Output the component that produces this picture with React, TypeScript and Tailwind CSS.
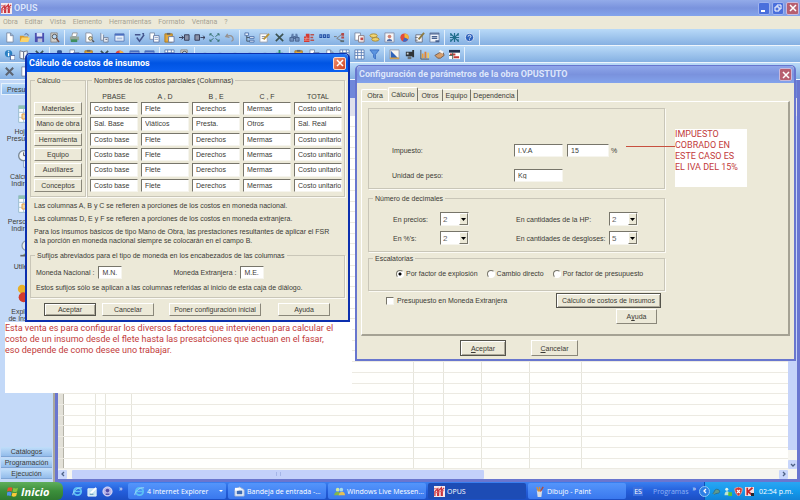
import type { ReactNode } from "react";
import clsx from "clsx";

const menus = ["Obra", "Editar", "Vista", "Elemento", "Herramientas", "Formato", "Ventana", "?"];

const mainBar = [
  ["page", "folder", "disk", "find"],
  ["printer", "preview", "clip", "screen"],
  ["check", "copy", "paste", "indent", "outdent", "expand", "undo"],
  ["tree", "edit", "cross", "binoculars", "bricks", "decimals", "branch"],
  ["copyred", "coins", "photo", "pie", "pencil", "form"],
  ["star", "help"],
];

const secondBar = [
  ["info", "book", "cross"],
  ["pin", "copy", "paste", "cross", "pie", "screen", "screen"],
  ["grid", "find"],
  ["dot", "dot", "dot", "dot", "dot", "plus"],
  ["paste", "copy", "page", "grid", "grid", "filter"],
  ["chart", "camera", "bars", "hand", "gantt"],
];

const sideItems = [
  { icon: "sheet", lines: ["Hoja de", "Presupuesto"] },
  { icon: "clock", lines: ["Cálculo de", "Indirectos"] },
  { icon: "sheet", lines: ["Personal de", "Indirectos"] },
  { icon: "tools", lines: ["Utilerías"] },
  { icon: "balls", lines: ["Explosión", "de Insumos"] },
];

const columns = ["PBASE", "A , D", "B , E", "C , F", "TOTAL"];
const standard = ["Costo base", "Flete", "Derechos", "Mermas", "Costo unitario"];
const costRows = [
  { name: "Materiales", values: standard },
  { name: "Mano de obra", values: ["Sal. Base", "Viáticos", "Presta.", "Otros", "Sal. Real"] },
  { name: "Herramienta", values: standard },
  { name: "Equipo", values: standard },
  { name: "Auxiliares", values: standard },
  { name: "Conceptos", values: standard },
];

const tasks = [
  { icon: "ie", label: "4 Internet Explorer", group: true },
  { icon: "mail", label: "Bandeja de entrada -..." },
  { icon: "people", label: "Windows Live Messen..." },
  { icon: "opus", label: "OPUS", active: true },
  { icon: "paint", label: "Dibujo - Paint" },
];

const drawings: Record<string, ReactNode> = {
  page: <path d="M3 1h4l3 3v7H3z M7 1v3h3" fill="#fff" stroke="#7d8da6" />,
  folder: (
    <>
      <path d="M1 4h4l1 1h4v6H1z" fill="#d99a2b" />
      <path d="M3 6h9l-2 5H1z" fill="#fbd46b" />
      <path d="M6 3c2-2 4-1 4 1" fill="none" stroke="#44598a" />
    </>
  ),
  disk: (
    <>
      <path d="M1 1h10v10H1z" fill="#4a4fb0" />
      <path d="M3 1h6v4H3z" fill="#dde4f7" />
      <path d="M4 7h5v4H4z" fill="#b9bfd8" />
    </>
  ),
  find: (
    <>
      <path d="M2 1h7v10H2z" fill="#d3d1cb" stroke="#8a8a8a" />
      <circle cx="6" cy="5" r="2.5" fill="#b7d5f1" stroke="#555" />
      <path d="M8 7l3 4" stroke="#7b4a3a" strokeWidth="1.5" />
    </>
  ),
  printer: (
    <>
      <path d="M4 1h5l-1 4H3z" fill="#fff" stroke="#999" />
      <path d="M1 5h10v4H1z" fill="#97a79b" />
      <path d="M2 8h7v3H2z" fill="#3f8f5e" />
    </>
  ),
  preview: (
    <>
      <path d="M2 1h5l2 2v8H2z" fill="#fff" stroke="#8a93a5" />
      <circle cx="7" cy="7" r="2" fill="#f1deb1" stroke="#665" />
      <path d="M9 9l2 2" stroke="#555" strokeWidth="1.5" />
    </>
  ),
  clip: (
    <>
      <path d="M2 1v8h3V3M5 6h5v5H5z" fill="#e8edf4" stroke="#7889a3" />
      <path d="M7 8h2" stroke="#556" />
    </>
  ),
  screen: (
    <>
      <path d="M1 2h10v8H1z" fill="#e9f1fb" stroke="#5a79b8" />
      <path d="M1 2h10v2H1z" fill="#4a6fc0" />
      <path d="M3 6h6v2H3z" fill="#a9bedf" />
    </>
  ),
  check: <path d="M1 3h6M9 2h2M3 6l3 4 5-7" fill="none" stroke="#44558c" strokeWidth="1.6" />,
  copy: (
    <>
      <path d="M1 1h5v7H1z" fill="#fff" stroke="#7f90ad" />
      <path d="M5 4h6v7H5z" fill="#fff" stroke="#5f76a4" />
      <path d="M6 6h4M6 8h4" stroke="#93a6ca" />
    </>
  ),
  paste: (
    <>
      <path d="M1 2h8v9H1z" fill="#e2a83b" stroke="#a87b24" />
      <path d="M3 1h4v2H3z" fill="#666" />
      <path d="M5 5h6v6H5z" fill="#fff" stroke="#6a7ca4" />
    </>
  ),
  indent: <path d="M0 6h5M3 4l2 2-2 2M6 3h5v6H6z" fill="#8b93aa" stroke="#333a55" />,
  outdent: <path d="M1 3h5v6H1zM7 6h5M10 4l2 2-2 2" fill="#8b93aa" stroke="#333a55" />,
  expand: <path d="M1 2l4 3M11 2L7 5M1 10l4-3M11 10L7 7M1 4V2h2M9 2h2v2M1 8v2h2M9 10h2V8" fill="none" stroke="#36706c" />,
  undo: <path d="M4 2L2 5l4 1M2 5c5-2 8-1 8 3 0 1-1 2-2 2" fill="none" stroke="#97918e" strokeWidth="1.4" />,
  tree: (
    <>
      <path d="M1 1h4v3H1zM6 5h5v2H6zM6 9h5v2H6z" fill="#e3edfa" stroke="#5476ae" />
      <path d="M3 4v6h3M3 6h3" fill="none" stroke="#456" />
    </>
  ),
  edit: (
    <>
      <path d="M1 2h8v9H1z" fill="#fff" stroke="#9aa3b3" />
      <path d="M3 5h4M3 7h3" stroke="#7886a0" />
      <path d="M5 8l6-6" stroke="#b89336" strokeWidth="2" />
    </>
  ),
  cross: <path d="M2 2l8 8M10 2l-8 8" stroke="#3d5353" strokeWidth="1.8" />,
  greycross: <path d="M2 2l8 8M10 2l-8 8" stroke="#5c6470" strokeWidth="2.2" />,
  binoculars: (
    <>
      <path d="M3 2h2v4H2zM7 2h2l1 4H7z" fill="#5e7dab" />
      <path d="M1 6h4v4H1zM7 6h4v4H7zM5 5h2v2H5z" fill="#7391bd" stroke="#48648f" />
    </>
  ),
  bricks: (
    <>
      <path d="M0 5h6v6H0zM2 2h4v3H2z" fill="#d43b34" />
      <path d="M0 7h6M0 9h6M3 5v2M2 7v2" stroke="#f6c7c0" strokeWidth="0.5" />
      <path d="M7 3h4M7 6h3M7 9h4" stroke="#b9534f" strokeWidth="1.5" />
    </>
  ),
  decimals: (
    <>
      <path d="M1 3h2v3H1zM5 3h2v3H5zM9 3h2v3H9z" fill="none" stroke="#2450a5" strokeWidth="1.2" />
      <path d="M0 9h12" stroke="#8fb8e8" />
    </>
  ),
  branch: (
    <>
      <path d="M0 5h3M3 7l6-5M3 7l6 3" fill="none" stroke="#777" />
      <path d="M8 1h3v3H8zM8 5h3v2H8z" fill="#b34a48" />
      <path d="M7 9h4v2H7z" fill="#5d6d73" />
    </>
  ),
  copyred: (
    <>
      <path d="M1 1h6v8H1z" fill="#fff" stroke="#7e8da7" />
      <path d="M5 4h6v7H5z" fill="#fff" stroke="#8d7b80" />
      <path d="M7 6h3v3H7z" fill="#c14b49" />
    </>
  ),
  coins: (
    <>
      <ellipse cx="5" cy="4" rx="4" ry="2" fill="#f1d675" stroke="#a88a35" />
      <ellipse cx="7" cy="8" rx="4" ry="2" fill="#eed06a" stroke="#a88a35" />
    </>
  ),
  photo: (
    <>
      <path d="M1 1h10v10H1z" fill="#f5f5f7" stroke="#8792ab" />
      <circle cx="6" cy="5" r="2" fill="#cf8173" />
      <path d="M3 10c0-3 6-3 6 0z" fill="#4d6aa4" />
    </>
  ),
  pie: (
    <>
      <circle cx="6" cy="6" r="4.5" fill="#e24a3b" />
      <path d="M6 6V1.5A4.5 4.5 0 0 1 10 8z" fill="#f2b73c" />
      <path d="M6 6l4 2a4.500 4.500 0 0 1-6 2z" fill="#3f68c4" />
    </>
  ),
  pencil: (
    <>
      <path d="M2 3h7v8H2zM1 6h3M1 9h3" fill="#f4f5f8" stroke="#6d7484" />
      <path d="M5 8l6-7" stroke="#8d7a43" strokeWidth="2" />
    </>
  ),
  form: (
    <>
      <path d="M1 1h10v10H1z" fill="#eef3fa" stroke="#6f83a8" />
      <path d="M1 2h10M3 5h6M3 7h6" stroke="#47618f" strokeWidth="1.5" />
      <path d="M7 9h4v2H7z" fill="#47618f" />
    </>
  ),
  star: <path d="M6 1v10M1 6h10M2 2l8 8M10 2l-8 8M2 1v3M10 1v3M2 8v3M10 8v3" stroke="#1e6d8b" strokeWidth="1.3" />,
  help: (
    <>
      <circle cx="6" cy="6" r="4.5" fill="#2e62bc" stroke="#d6e3f6" />
      <path d="M4.500 5c0-2 3-2 3 0 0 1-1.500 1-1.500 2M6 8v1" fill="none" stroke="#fff" />
    </>
  ),
  info: (
    <>
      <circle cx="5" cy="5" r="4" fill="#2a80c4" />
      <path d="M5 2v1M5 4v4" stroke="#fff" strokeWidth="1.5" />
      <path d="M7 7h5v5H7z" fill="#fff" stroke="#49659f" />
    </>
  ),
  book: <path d="M1 2l4 1v8l-4-1zM5 3l4-1v8l-4 1zM9 5l2 6" fill="#f7f8fb" stroke="#66728c" />,
  pin: <path d="M4 2h4v4l2 2H2l2-2zM6 8v3" fill="#315aa4" stroke="#24488c" />,
  grid: (
    <>
      <path d="M1 1h10v10H1z" fill="#fff" stroke="#5d7fb5" />
      <path d="M1 4h10M1 7h10M4 1v10M8 1v10" stroke="#5d7fb5" />
    </>
  ),
  dot: <path d="M5 4h3v3H5z" fill="#7aa0cf" />,
  plus: <path d="M6 1v8M2 5h8" stroke="#2e8d6c" strokeWidth="2" />,
  filter: <path d="M1 1h10L7 6v5L5 9V6z" fill="#5c95e0" stroke="#3b6fc2" />,
  chart: (
    <>
      <path d="M1 1h10v10H1z" fill="#f6f6f2" stroke="#9099ab" />
      <path d="M2 2v8h8z" fill="#2e63b8" />
      <path d="M1 10h10" stroke="#d69d3a" strokeWidth="1.5" />
    </>
  ),
  camera: (
    <>
      <path d="M2 3h7v5H2zM9 1h2v8H9z" fill="#2f3438" />
      <path d="M4 8h4v3H4z" fill="#687076" />
      <path d="M3 4h2v2H3z" fill="#cfd6da" />
    </>
  ),
  bars: (
    <>
      <path d="M2 1v10h9" fill="none" stroke="#5a5a54" />
      <path d="M3 5h2v5H3z" fill="#e9a13c" />
      <path d="M6 3h2v7H6z" fill="#df7f35" />
      <path d="M9 4h2v6H9z" fill="#f0c95d" />
    </>
  ),
  hand: (
    <>
      <path d="M1 7l5-3h4l1 3-4 3H4z" fill="#d5a06f" stroke="#765a49" />
      <path d="M6 2l4 2" stroke="#f4f4f4" strokeWidth="2.5" />
    </>
  ),
  gantt: (
    <>
      <path d="M0 1h12v10H0z" fill="#fff" />
      <path d="M0 1h12v3H0z" fill="#21314e" />
      <path d="M1 5h6v2H1zM5 8h6v2H5z" fill="#c33a35" />
      <path d="M0 7h4M4 4v7" stroke="#465" />
    </>
  ),
  sheet: (
    <>
      <path d="M1 1h10v10H1z" fill="#fff" stroke="#9bbdd0" strokeWidth="0.6" />
      <path d="M1 1h10v2H1z" fill="#8ec1b4" />
      <path d="M1 5h10M1 8h10M4 3v8" stroke="#a9c6da" strokeWidth="0.6" />
      <path d="M3 6h4v3H3z" fill="#f0d9a0" stroke="#e6a04c" strokeWidth="0.6" />
    </>
  ),
  clock: (
    <>
      <path d="M4 3h7v8H4z" fill="#fff" stroke="#8fa9c5" strokeWidth="0.6" />
      <path d="M5 7h5M5 9h5" stroke="#8ec1b4" strokeWidth="0.6" />
      <circle cx="4" cy="4" r="3" fill="#f3f6f8" stroke="#788794" strokeWidth="0.8" />
      <path d="M4 2v2h2" fill="none" stroke="#555" strokeWidth="0.6" />
    </>
  ),
  tools: (
    <>
      <circle cx="6" cy="4" r="3" fill="#e8eef0" stroke="#8796a3" strokeWidth="0.7" />
      <path d="M3 10l5-4 2 4z" fill="#88a66a" />
      <path d="M2 10h8" stroke="#666" />
    </>
  ),
  balls: (
    <>
      <circle cx="3" cy="3" r="2.5" fill="#e8b028" />
      <circle cx="8" cy="5" r="3" fill="#356ab8" />
      <circle cx="4" cy="8" r="3" fill="#d23a2d" />
    </>
  ),
  opus: (
    <>
      <path d="M0 0h12v12H0z" fill="#f5e9ec" />
      <path d="M1 11V6l3-3v8M5 11V5l3-3v9M9 11V4l2-2" fill="none" stroke="#c9343d" strokeWidth="1.4" />
      <path d="M0 3h5M0 8l11-3" stroke="#d9606a" />
    </>
  ),
  ie: (
    <>
      <circle cx="6" cy="6" r="4" fill="none" stroke="#5cc0f5" strokeWidth="2" />
      <path d="M3 6h7" stroke="#5cc0f5" strokeWidth="1.6" />
      <path d="M1 10C0 7 6 1 11 2" fill="none" stroke="#a6ddf8" />
    </>
  ),
  mail: (
    <>
      <path d="M1 4l5-3 5 3v7H1z" fill="#eef4fb" stroke="#9fb4d5" />
      <path d="M3 5h6v4H3z" fill="#3d6bb4" />
      <path d="M1 2h4v3H1z" fill="#fff" />
    </>
  ),
  people: (
    <>
      <circle cx="4" cy="4" r="2" fill="#cfe8a4" />
      <circle cx="8" cy="4" r="2" fill="#a7dbe8" />
      <path d="M0 10c1-5 7-5 7 0z" fill="#82b64d" />
      <path d="M5 10c1-5 7-5 7 0z" fill="#e4c057" />
    </>
  ),
  paint: (
    <>
      <path d="M3 5h6l-1 7H4z" fill="#d7dce4" />
      <path d="M5 6L3 1M6 6V1" stroke="#d4903e" strokeWidth="1.5" />
      <path d="M7 6l3-5" stroke="#b5493a" strokeWidth="1.5" />
    </>
  ),
  desktop: (
    <>
      <path d="M1 3h9v8H1z" fill="#c8e4f2" stroke="#e8f5fb" />
      <path d="M4 8l6-6" stroke="#fff" strokeWidth="2" />
      <path d="M3 9h4" stroke="#4a86ad" />
    </>
  ),
  media: (
    <>
      <circle cx="6" cy="6" r="5" fill="#b9b5e8" stroke="#e5e4fa" />
      <circle cx="6" cy="5" r="2" fill="#4f4ba8" />
      <path d="M4 9h4" stroke="#4f4ba8" strokeWidth="1.5" />
    </>
  ),
  msn: (
    <>
      <circle cx="5" cy="3" r="2" fill="#e5f4ea" />
      <path d="M2 11c0-7 7-7 7 0z" fill="#bfe3d1" />
      <path d="M7 7h5v5H7z" fill="#57c33b" />
    </>
  ),
  plug: <path d="M1 9c2-1 2-6 5-6s5 2 4 4-5 1-7 3" fill="#5f9a8d" stroke="#2e6680" />,
  shield: (
    <>
      <path d="M6 0l5 2c0 5-2 8-5 10C3 10 1 7 1 2z" fill="#d8332f" stroke="#f1b5b0" />
      <path d="M4 4l4 4M8 4L4 8" stroke="#fff" strokeWidth="1.5" />
    </>
  ),
  kaspersky: (
    <>
      <path d="M0 0h12v12H0z" fill="#f3dfe0" />
      <path d="M3 1v10M10 1L4 6l6 5" fill="none" stroke="#c7262c" strokeWidth="2.2" />
      <path d="M8 8h4v4H8z" fill="#26262c" />
    </>
  ),
  flag: (
    <>
      <path d="M1 2c2-1 3-1 5 0L5 6C3 5 2 5 0 6z" fill="#e8532a" />
      <path d="M7 2c2 1 3 1 5 0l-1 4C9 7 8 7 6 6z" fill="#86c440" />
      <path d="M0 7c2-1 3-1 5 0l-1 4C2 10 1 10-1 11z" fill="#4e93e6" />
      <path d="M6 7c2 1 3 1 5 0l-1 4c-2 1-3 1-5 0z" fill="#f9c839" />
    </>
  ),
};

function Icon({ name, className = "h-[11px] w-[11px]" }: { name: string; className?: string }) {
  return (
    <svg viewBox="0 0 12 12" className={clsx("shrink-0", className)} aria-hidden="true">
      {drawings[name]}
    </svg>
  );
}

function Toolbar({ groups }: { groups: string[][] }) {
  return (
    <div className="flex h-[17px] items-center border-b border-[#eef5fc] bg-linear-to-b from-[#b9daf8] to-[#85b0e2] pl-[2px]">
      {groups.map((group, i) => (
        <div key={i} className="flex items-center">
          {group.map((name, j) => (
            <button key={j} type="button" aria-label={name} className="flex w-[15px] justify-center">
              <Icon name={name} />
            </button>
          ))}
          <span className="mx-[2px] h-[15px] w-px bg-[#e4effa]" />
        </div>
      ))}
    </div>
  );
}

function CloseButton({ faded = false }: { faded?: boolean }) {
  return (
    <button
      type="button"
      aria-label="Cerrar"
      className={clsx(
        "flex h-[13px] w-[13px] items-center justify-center rounded-[2px] border",
        faded ? "border-[#c9b9dc] bg-[#b75f70]" : "border-[#f6d9d0] bg-linear-to-br from-[#ee8f6e] to-[#d1401c]"
      )}
    >
      <svg viewBox="0 0 8 8" className="h-[8px] w-[8px]" aria-hidden="true">
        <path d="M1 1l6 6M7 1L1 7" stroke="#fff" strokeWidth="1.5" />
      </svg>
    </button>
  );
}

function Button({ children, className, main = false }: { children: ReactNode; className?: string; main?: boolean }) {
  return (
    <button
      type="button"
      className={clsx(
        "flex items-center justify-center whitespace-nowrap border bg-[#ece9d8]",
        main
          ? "border-[#55544c] shadow-[inset_1px_1px_0_#fff,inset_-1px_-1px_0_#aca899]"
          : "border-b-[#8a877a] border-l-white border-r-[#8a877a] border-t-white",
        className
      )}
    >
      {children}
    </button>
  );
}

function Group({ title, className, children }: { title?: string; className?: string; children: ReactNode }) {
  return (
    <fieldset className={clsx("relative min-w-0 border border-[#c9c6b8] shadow-[1px_1px_0_#fbfaf4]", className)}>
      {title && (
        <legend className="absolute -top-[5px] left-[4px] bg-[#ece9d8] px-[2px] leading-[9px]">{title}</legend>
      )}
      {children}
    </fieldset>
  );
}

function Field({ label, value, className }: { label: string; value: string; className?: string }) {
  return (
    <input
      type="text"
      aria-label={label}
      defaultValue={value}
      className={clsx(
        "min-w-0 border border-b-[#f6f5ee] border-l-[#77756a] border-r-[#f6f5ee] border-t-[#77756a] bg-white pl-[3px] outline-none",
        className
      )}
    />
  );
}

function Decimals({ label, value }: { label: string; value: string }) {
  return (
    <label className="flex items-center justify-between">
      {label}
      <span className="relative flex h-[14px] w-[29px]">
        <select
          defaultValue={value}
          className="w-full appearance-none border border-b-[#f6f5ee] border-l-[#77756a] border-r-[#f6f5ee] border-t-[#77756a] bg-white pl-[2px] text-[8px] text-[#66655f] outline-none"
        >
          {["0", "1", "2", "3", "4", "5", "6"].map((n) => (
            <option key={n}>{n}</option>
          ))}
        </select>
        <span className="pointer-events-none absolute inset-y-px right-px flex w-[9px] items-center justify-center border border-b-[#77756a] border-l-white border-r-[#77756a] border-t-white bg-[#ece9d8]">
          <svg viewBox="0 0 5 3" className="h-[3px] w-[5px]" aria-hidden="true">
            <path d="M0 0h5L2.5 3z" />
          </svg>
        </span>
      </span>
    </label>
  );
}

function Radio({ label, checked = false }: { label: string; checked?: boolean }) {
  return (
    <label className="flex items-center gap-[2px]">
      <input
        type="radio"
        name="escalatorias"
        defaultChecked={checked}
        className="h-[8px] w-[8px] appearance-none rounded-full border border-b-white border-l-[#77756a] border-r-white border-t-[#77756a] bg-white checked:bg-[radial-gradient(circle,#000_1px,#fff_2px)]"
      />
      {label}
    </label>
  );
}

function CostDialog() {
  return (
    <section className="absolute left-[25px] top-[53px] flex h-[269px] w-[325px] flex-col rounded-t-[5px] border-2 border-t border-[#0c2fae] bg-[#ece9d8]">
      <header className="flex h-[18px] shrink-0 items-center justify-between rounded-t-[4px] bg-linear-to-b from-[#2a7bf5] via-[#0054e3] to-[#0a5ff0] px-[2px] font-[Roboto,sans-serif] text-[9px] font-bold text-white">
        <h2>Cálculo de costos de insumos</h2>
        <CloseButton />
      </header>

      <div className="flex flex-1 flex-col px-[3px] pt-[8px]">
        <div className="flex h-[117px] shrink-0 gap-px">
          <Group title="Cálculo" className="w-[56px] px-[3px] pt-[21px]">
            <div className="grid h-[90px] grid-rows-6 gap-[2px]">
              {costRows.map((row) => (
                <Button key={row.name}>{row.name}</Button>
              ))}
            </div>
          </Group>
          <Group title="Nombres de los costos parciales (Columnas)" className="flex-1 px-[2px] pt-[10px]">
            <div className="grid h-[11px] grid-cols-5 items-center gap-[3px] text-center">
              {columns.map((name) => (
                <span key={name}>{name}</span>
              ))}
            </div>
            <div className="grid h-[90px] grid-cols-5 grid-rows-6 gap-x-[3px] gap-y-[2px]">
              {costRows.map((row) =>
                row.values.map((value, i) => (
                  <Field key={row.name + i} label={`${row.name} ${columns[i]}`} value={value} />
                ))
              )}
            </div>
          </Group>
        </div>

        <div className="flex flex-col gap-[4px] px-[4px] pt-[4px] leading-[9px]">
          <p>Las columnas A, B y C se refieren a porciones de los costos en moneda nacional.</p>
          <p>Las columnas D, E y F se refieren a porciones de los costos en moneda extranjera.</p>
          <p>
            Para los insumos básicos de tipo Mano de Obra, las prestaciones resultantes de aplicar el FSR
            <br />
            a la porción en moneda nacional siempre se colocarán en el campo B.
          </p>
        </div>

        <Group
          title="Sufijos abreviados para el tipo de moneda en los encabezados de las columnas"
          className="mt-[10px] h-[43px] shrink-0 px-[5px] pt-[10px]"
        >
          <div className="flex">
            <label className="flex items-center gap-[4px]">
              Moneda Nacional :
              <Field label="Moneda Nacional" value="M.N." className="h-[13px] w-[24px]" />
            </label>
            <label className="ml-[51px] flex items-center gap-[4px]">
              Moneda Extranjera :
              <Field label="Moneda Extranjera" value="M.E." className="h-[13px] w-[24px]" />
            </label>
          </div>
          <p className="mt-[4px] leading-[9px]">
            Estos sufijos sólo se aplican a las columnas referidas al inicio de esta caja de diálogo.
          </p>
        </Group>

        <div className="mt-[5px] flex h-[13px] pl-[14px]">
          <Button main className="w-[52px]">Aceptar</Button>
          <Button className="ml-[6px] w-[52px]">Cancelar</Button>
          <Button className="ml-[15px] w-[92px]">Poner configuración inicial</Button>
          <Button className="ml-[17px] w-[52px]">Ayuda</Button>
        </div>
      </div>
    </section>
  );
}

function Tabs() {
  return (
    <div role="tablist" className="flex h-[14px] items-end">
      <button type="button" role="tab" className="h-[12px] w-[27px] rounded-t-[2px] border-l border-t border-white">
        Obra
      </button>
      <button
        type="button"
        role="tab"
        aria-selected="true"
        className="h-[14px] w-[30px] rounded-t-[2px] border border-b-0 border-l-white border-r-[#77756a] border-t-white"
      >
        Cálculo
      </button>
      <button type="button" role="tab" className="h-[12px] w-[25px] border-r border-t border-r-[#77756a] border-t-white">
        Otros
      </button>
      <button type="button" role="tab" className="h-[12px] w-[28px] border-r border-t border-r-[#77756a] border-t-white">
        Equipo
      </button>
      <button type="button" role="tab" className="h-[12px] w-[47px] border-r border-t border-r-[#77756a] border-t-white">
        Dependencia
      </button>
    </div>
  );
}

function ConfigDialog() {
  return (
    <section className="absolute left-[355px] top-[65px] flex h-[296px] w-[441px] flex-col rounded-t-[5px] border-2 border-t border-[#6876ce] bg-[#ece9d8]">
      <header className="flex h-[17px] shrink-0 items-center justify-between rounded-t-[4px] bg-linear-to-b from-[#8fa6ea] via-[#7a92dd] to-[#83a3ec] px-[2px] font-[Roboto,sans-serif] text-[9px] font-bold text-[#dde6fb]">
        <h2>Configuración de parámetros de la obra OPUSTUTO</h2>
        <CloseButton faded />
      </header>

      <div className="flex flex-1 flex-col px-[4px] pt-[4px]">
        <Tabs />
        <div className="h-[235px] border-b-2 border-l border-r-2 border-t border-b-[#a5a294] border-l-white border-r-[#a5a294] border-t-white pl-[6px] pt-[6px]">
          <div className="flex w-[297px] flex-col">
            <Group className="grid h-[81px] content-start gap-y-[12px] pl-[23px] pt-[35px]">
              <div className="flex h-[13px] items-center">
                <label htmlFor="impuesto" className="w-[122px]">Impuesto:</label>
                <input
                  id="impuesto"
                  type="text"
                  defaultValue="I.V.A"
                  className="h-[13px] w-[49px] border border-b-[#f6f5ee] border-l-[#77756a] border-r-[#f6f5ee] border-t-[#77756a] bg-white pl-[3px] outline-none"
                />
                <Field label="Porcentaje" value="15" className="ml-[4px] mr-[2px] h-[13px] w-[42px]" />%
              </div>
              <div className="flex h-[13px] items-center">
                <label htmlFor="peso" className="w-[122px]">Unidad de peso:</label>
                <input
                  id="peso"
                  type="text"
                  defaultValue="Kg"
                  className="h-[13px] w-[49px] border border-b-[#f6f5ee] border-l-[#77756a] border-r-[#f6f5ee] border-t-[#77756a] bg-white pl-[3px] outline-none"
                />
              </div>
            </Group>

            <Group title="Número de decimales" className="mt-[9px] h-[54px] pl-[24px] pt-[13px]">
              <div className="grid grid-cols-[76px_122px] gap-x-[47px] gap-y-[5px]">
                <Decimals label="En precios:" value="2" />
                <Decimals label="En cantidades de la HP:" value="2" />
                <Decimals label="En %'s:" value="2" />
                <Decimals label="En cantidades de desgloses:" value="5" />
              </div>
            </Group>

            <Group title="Escalatorias" className="mt-[6px] h-[33px] pl-[27px] pt-[10px]">
              <div className="flex gap-[9px]">
                <Radio label="Por factor de explosión" checked />
                <Radio label="Cambio directo" />
                <Radio label="Por factor de presupuesto" />
              </div>
            </Group>

            <div className="mt-[2px] flex items-center justify-between pl-[18px] pr-[4px]">
              <label className="flex items-center gap-[3px]">
                <input
                  type="checkbox"
                  className="h-[8px] w-[8px] appearance-none border border-b-[#f6f5ee] border-l-[#77756a] border-r-[#f6f5ee] border-t-[#77756a] bg-white"
                />
                Presupuesto en Moneda Extranjera
              </label>
              <Button main className="h-[15px] w-[105px]">Cálculo de costos de insumos</Button>
            </div>
            <Button className="mr-[8px] mt-px h-[15px] w-[41px] self-end">
              A<u>y</u>uda
            </Button>
          </div>
        </div>

        <div className="mt-[4px] flex h-[16px] gap-[25px] pl-[99px]">
          <Button main className="w-[46px]"><u>A</u>ceptar</Button>
          <Button className="w-[47px]"><u>C</u>ancelar</Button>
        </div>
      </div>
    </section>
  );
}

function Notes() {
  return (
    <>
      <p className="absolute left-[5px] top-[322px] h-[71px] w-[347px] whitespace-nowrap bg-white pt-px font-[Roboto,sans-serif] text-[9px] leading-[11px] text-[#c23b3b]">
        Esta venta es para configurar los diversos factores que intervienen para calcular el
        <br />
        costo de un insumo desde el flete hasta las presatciones que actuan en el fasar,
        <br />
        eso depende de como desee uno trabajar.
      </p>
      <div className="absolute left-[626px] top-[129px] flex items-start font-[Roboto,sans-serif] text-[9px] leading-[11px] text-[#c23b3b]">
        <span className="mt-[17px] h-px w-[49px] bg-[#c8503f]" />
        <p className="h-[58px] w-[72px] whitespace-nowrap bg-white">
          IMPUESTO
          <br />
          COBRADO EN
          <br />
          ESTE CASO ES
          <br />
          EL IVA DEL 15%
        </p>
      </div>
    </>
  );
}

function Sidebar() {
  return (
    <aside className="flex w-[53px] shrink-0 flex-col bg-[#c3d9f8] px-px pb-[3px] pt-[3px]">
      <h3 className="flex h-[12px] items-center border border-[#e6f1fc] bg-linear-to-b from-[#bcdcfa] to-[#8db8e8] pl-[5px]">
        Presupuesto
      </h3>
      <ul className="flex flex-1 flex-col pt-[9px]">
        {sideItems.map((item, i) => (
          <li key={i} className="flex h-[45px] flex-col items-center gap-[4px] leading-[7px]">
            <Icon name={item.icon} className="h-[20px] w-[20px]" />
            <span className="whitespace-nowrap text-center">
              {item.lines.map((line) => (
                <span key={line} className="block">{line}</span>
              ))}
            </span>
          </li>
        ))}
      </ul>
      <div className="flex flex-col gap-px">
        {["Catálogos", "Programación", "Ejecución"].map((name) => (
          <button
            key={name}
            type="button"
            className="h-[10px] border-b border-[#7ea5d5] bg-linear-to-b from-[#c0defa] to-[#93bceb] leading-[9px]"
          >
            {name}
          </button>
        ))}
      </div>
    </aside>
  );
}

function SheetWindow() {
  return (
    <main className="flex min-w-0 flex-1 flex-col border-b-[3px] border-l-[3px] border-r-[3px] border-[#6a76cf]">
      <div className="h-[18px] shrink-0 bg-[#7087da]" />
      <div className="h-[18px] shrink-0 bg-[#dfe0ec]" />
      <div className="flex min-h-0 flex-1">
        <div className="flex flex-1 flex-col bg-[#fffffd]">
          {Array.from({ length: 33 }, (_, i) => (
            <div key={i} className="flex flex-1 border-b border-[#eceae2]">
              <span className="w-[6px] border-r border-[#b5b3a8] bg-[#e3e1d8]" />
              <span className="w-[32px] border-r border-[#e6e5dc]" />
              <span className="w-[10px] border-r border-[#e6e5dc]" />
              <span className="w-[26px] border-r border-[#e6e5dc]" />
              <span className="w-[282px] border-r border-[#e6e5dc]" />
              <span className="w-[30px] border-r border-[#e6e5dc]" />
              <span className="w-[38px] border-r border-[#e6e5dc]" />
              <span className="w-[48px] border-r border-[#e6e5dc]" />
              <span className="w-[52px] border-r border-[#e6e5dc]" />
            </div>
          ))}
        </div>
        <div className="flex w-[9px] shrink-0 flex-col bg-[#f6f5f0]">
          <span className="flex-1 bg-[#c5d3f9]" />
          <span className="h-[10px]" />
          <ScrollButton d="M1 2l2 2 2-2" />
        </div>
      </div>
      <div className="flex h-[10px] shrink-0 items-center bg-[#f6f5f0]">
        <ScrollButton d="M4 1L2 3l2 2" />
        <span className="ml-[5px] flex h-[9px] w-[412px] items-center justify-center rounded-[1px] bg-[#c3d0fa]">
          <span className="h-[4px] w-[5px] border-x border-[#a5b5e8]" />
        </span>
        <span className="flex-1" />
        <ScrollButton d="M2 1l2 2-2 2" />
        <span className="w-[9px]" />
      </div>
    </main>
  );
}

function ScrollButton({ d }: { d: string }) {
  return (
    <button type="button" aria-label="Desplazar" className="flex h-[9px] w-[9px] items-center justify-center rounded-[1px] bg-[#c8d6fb]">
      <svg viewBox="0 0 6 6" className="h-[6px] w-[6px]" aria-hidden="true">
        <path d={d} fill="none" stroke="#4d6185" strokeWidth="1.3" />
      </svg>
    </button>
  );
}

function Taskbar() {
  return (
    <footer className="flex h-[18px] shrink-0 items-center bg-linear-to-b from-[#3b80f0] via-[#245edb] to-[#1c4fc4] font-['Open_Sans',sans-serif] text-[7px] text-white">
      <button
        type="button"
        className="flex h-full w-[63px] items-center gap-[3px] rounded-r-[6px] bg-linear-to-b from-[#5fae5c] via-[#3c8f3b] to-[#2f7a30] pl-[7px] font-['Open_Sans',sans-serif] text-[11px] font-bold italic"
      >
        <Icon name="flag" />
        Inicio
      </button>
      <div className="flex w-[65px] items-center gap-[4px] pl-[9px]">
        <Icon name="ie" />
        <Icon name="desktop" />
        <Icon name="media" />
        <span className="pb-[6px] pl-[2px]">»</span>
      </div>
      <div className="flex h-[16px] min-w-0 gap-[2px]">
        {tasks.map((task) => (
          <button
            key={task.label}
            type="button"
            className={clsx(
              "flex w-[98px] items-center gap-[2px] whitespace-nowrap rounded-[2px] pl-[6px]",
              task.active ? "bg-[#1d4cb5]" : "bg-linear-to-b from-[#5495fb] to-[#3a78ee]"
            )}
          >
            <Icon name={task.icon} />
            {task.label}
            {task.group && (
              <svg viewBox="0 0 4 2" className="ml-auto mr-[3px] h-[2px] w-[4px]" aria-hidden="true">
                <path d="M0 0h4L2 2z" fill="#fff" />
              </svg>
            )}
          </button>
        ))}
      </div>
      <span className="ml-auto bg-[#3c6fdd] px-px leading-[9px]">ES</span>
      <span className="ml-[10px] text-[#8fb2f3]">Programas</span>
      <span className="ml-[4px] pb-[6px]">»</span>
      <div className="ml-[8px] flex h-full w-[96px] items-center gap-[2px] border-l border-[#0f4fb5] bg-linear-to-b from-[#2aa5f2] via-[#139aec] to-[#1284d8]">
        <button
          type="button"
          aria-label="Mostrar iconos"
          className="-ml-[6px] flex h-[11px] w-[11px] items-center justify-center rounded-full border border-[#8cc7f6] bg-[#2f7fe4]"
        >
          <svg viewBox="0 0 6 6" className="h-[6px] w-[6px]" aria-hidden="true">
            <path d="M4 1L2 3l2 2" fill="none" stroke="#fff" strokeWidth="1.3" />
          </svg>
        </button>
        <Icon name="plug" className="h-[9px] w-[9px]" />
        <Icon name="msn" className="h-[9px] w-[9px]" />
        <Icon name="shield" className="h-[9px] w-[9px]" />
        <Icon name="kaspersky" className="h-[9px] w-[9px]" />
        <time className="ml-[3px] whitespace-nowrap">02:54 p.m.</time>
      </div>
    </footer>
  );
}

export default function App() {
  return (
    <div className="relative flex h-screen flex-col overflow-hidden bg-[#ece9d8] font-['Liberation_Sans',Arial,sans-serif] text-[7px] leading-[9px] text-[#3b3a36]">
      <header className="flex h-[16px] shrink-0 items-center gap-[2px] bg-linear-to-b from-[#93abe9] via-[#7a93dd] to-[#83a4ec] pl-px pr-px">
        <Icon name="opus" />
        <h1 className="flex-1 font-[Roboto,sans-serif] text-[9px] font-semibold text-[#dde6fb]">OPUS</h1>
        <div className="flex gap-[2px]">
          <button type="button" aria-label="Minimizar" className="flex h-[13px] w-[12px] items-end rounded-[2px] border border-[#9fb3ee] bg-[#4a6fdc] p-[2px]">
            <span className="h-[2px] w-[4px] bg-white" />
          </button>
          <button type="button" aria-label="Restaurar" className="flex h-[13px] w-[12px] items-center justify-center rounded-[2px] border border-[#9fb3ee] bg-[#4a6fdc]">
            <svg viewBox="0 0 8 8" className="h-[8px] w-[8px]" aria-hidden="true">
              <path d="M3 3V1h4v4H5M1 3h4v4H1z" fill="none" stroke="#fff" />
            </svg>
          </button>
          <CloseButton faded />
        </div>
      </header>

      <nav className="flex h-[13px] shrink-0 items-center gap-[7px] pl-[3px] font-[Roboto,sans-serif] text-[7px] text-[#a5a293]">
        {menus.map((name) => (
          <a key={name} href="#">{name}</a>
        ))}
      </nav>

      <div className="flex shrink-0 flex-col">
        <Toolbar groups={mainBar} />
        <Toolbar groups={secondBar} />
        <Toolbar groups={[["greycross", "page"]]} />
      </div>

      <div className="flex min-h-0 flex-1">
        <Sidebar />
        <div className="w-[2px] bg-[#a9a79c]" />
        <SheetWindow />
      </div>

      <Taskbar />

      <ConfigDialog />
      <Notes />
      <CostDialog />
    </div>
  );
}
